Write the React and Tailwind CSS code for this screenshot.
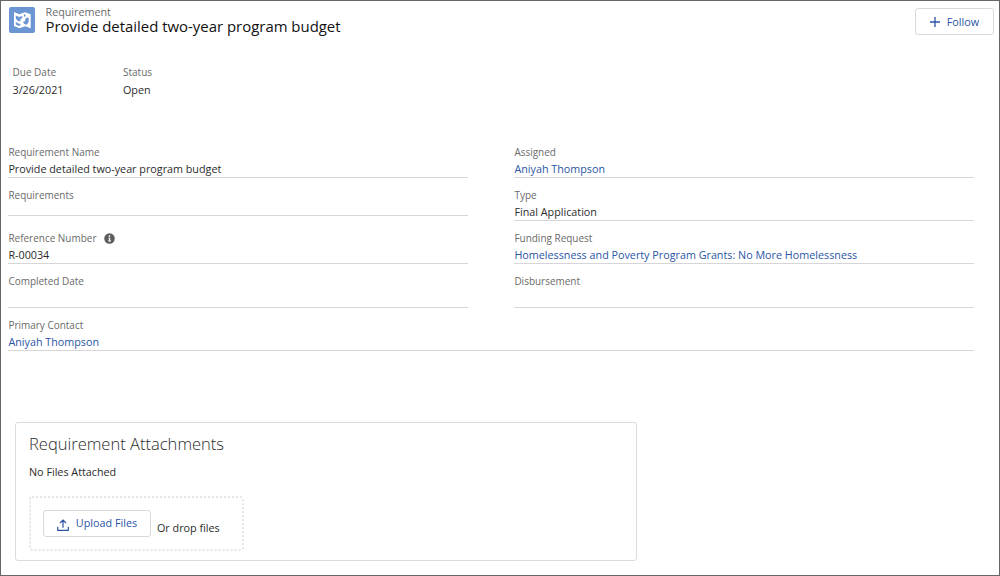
const fields = [
  { label: "Requirement Name", value: "Provide detailed two-year program budget", box: "h-[34px]" },
  { label: "Assigned", value: "Aniyah Thompson", link: true, box: "h-[34px]" },
  { label: "Requirements", value: "", box: "mt-[9px] h-[29px]" },
  { label: "Type", value: "Final Application", box: "mt-[9px] h-[34px]" },
  { label: "Reference Number", value: "R-00034", info: true, box: "mt-[9px] h-[34px]" },
  { label: "Funding Request", value: "Homelessness and Poverty Program Grants: No More Homelessness", link: true, box: "mt-[9px] h-[34px]" },
  { label: "Completed Date", value: "", box: "mt-[9px] h-[35px]" },
  { label: "Disbursement", value: "", box: "mt-[9px] h-[35px]" },
  { label: "Primary Contact", value: "Aniyah Thompson", link: true, box: "mt-[9px] h-[34px] col-span-2" },
];

function InfoIcon() {
  return (
    <svg viewBox="0 0 22 22" className="ml-[8px] size-[11px]">
      <circle cx="11" cy="11" r="10.5" fill="#5c5c5c" />
      <circle cx="11" cy="6.2" r="1.8" fill="#fff" />
      <path d="M8.5 9.5h4v5.5h1.5v1.8H8.2V15h1.6v-3.8H8.5z" fill="#fff" />
    </svg>
  );
}

function MapIcon() {
  return (
    <svg viewBox="0 0 26 26" className="size-[26px] shrink-0 rounded-[2px] bg-[#6b96d3]">
      <path d="M5 5l5.3 2.2L16 5.3l5.7 2v13.9l-5.6-2-5.7 2L5 19z" fill="#fff" />
      <path d="M6.8 8.4l3.4 1.5 3-.9.2 2-2 .9.3 1.8-2 .8-2.9-2.7z" fill="#6b96d3" />
      <path d="M14.6 7.8l1.6-.5.6 1.6-1.3 1.2z" fill="#6b96d3" />
      <path d="M16.2 12l1.8-1.6 1.7.6v3.8l-1.6 2.6-2.6-.1-1.6-2.2 2.3-1z" fill="#6b96d3" />
      <path d="M6.8 14.8l2.4 1.6 2 .4.3 1.5-1.4.7-3.3-1.5z" fill="#6b96d3" />
    </svg>
  );
}

function Field({ label, value, link, info, box }) {
  return (
    <div className={`flex flex-col border-b border-[#d6d6d6] pl-[0.4px] ${box}`}>
      <div className="flex h-4 items-center pt-px text-[9.97px] text-[#6a6a6a]">
        <span>{label}</span>
        {info && <InfoIcon />}
      </div>
      {value && (
        <div className={link ? "h-[17px] text-[10.78px] leading-[17px] text-[#2a55a5]" : "h-[17px] text-[10.78px] leading-[17px] text-[#2b2b2b]"}>
          {value}
        </div>
      )}
    </div>
  );
}

function Summary({ label, value }) {
  return (
    <div className="w-[110.5px]">
      <div className="h-[17px] text-[10px] leading-[17px] text-[#6a6a6a]">{label}</div>
      <div className="h-[17px] text-[10.78px] leading-[17px] text-[#2b2b2b]">{value}</div>
    </div>
  );
}

export default function App() {
  return (
    <main className="flex h-[576px] w-[1000px] flex-col overflow-hidden border border-[#666] bg-white font-['Open_Sans',sans-serif] whitespace-nowrap">
      <header className="flex h-[60px] items-start pt-[6px] pr-[5px] pl-2">
        <MapIcon />
        <div className="ml-[10.5px] flex-1">
          <div className="h-[11px] text-[10.75px] leading-[11px] text-[#6a6a6a]">Requirement</div>
          <h1 className="h-[16px] text-[14.93px] leading-[16px] text-[#111]">Provide detailed two-year program budget</h1>
        </div>
        <button className="mt-px flex h-[27px] w-[79px] items-center justify-center gap-[7px] rounded-[3px] border border-[#d9d9d9] pt-px text-[10.8px] text-[#2a55a5]">
          <svg viewBox="0 0 10 10" className="size-[10px]">
            <path d="M5 0v10M0 5h10" stroke="currentColor" strokeWidth="1.3" />
          </svg>
          Follow
        </button>
      </header>
      <section className="flex h-[83px] pt-[3px] pl-[11.5px]">
        <Summary label="Due Date" value="3/26/2021" />
        <Summary label="Status" value="Open" />
      </section>
      <section className="grid grid-cols-[460px_460px] items-start gap-x-[46px] pl-[7px]">
        {fields.map((f) => (
          <Field key={f.label} {...f} />
        ))}
      </section>
      <section className="mt-[71px] ml-[14px] h-[139px] w-[622px] rounded-[3px] border border-[#dcdcdc] pt-[10px] pl-[13px]">
        <h2 className="h-[22px] text-[16.55px] leading-[22px] font-light text-[#2b2b2b]">Requirement Attachments</h2>
        <p className="mt-[8px] h-[17px] text-[10.78px] leading-[17px] text-[#2b2b2b]">No Files Attached</p>
        <div className="mt-[16px] flex h-[55px] w-[215px] rounded-[3px] border-2 border-dotted border-[#e6e6e6] pt-[12px] pl-[12px]">
          <button className="flex h-[27px] w-[108px] items-center justify-center gap-[7px] rounded-[3px] border border-[#d9d9d9] text-[10.8px] text-[#2a55a5]">
            <svg viewBox="0 0 12 12" className="mt-[3px] size-[12px]" fill="none" stroke="currentColor" strokeWidth="1.2">
              <path d="M.7 7.8v3.5h10.6V7.8M6 8.8V1.2M3 4l3-3 3 3" />
            </svg>
            Upload Files
          </button>
          <span className="mt-[9px] ml-[6px] h-[18px] text-[10.78px] leading-[18px] text-[#2b2b2b]">Or drop files</span>
        </div>
      </section>
    </main>
  );
}
